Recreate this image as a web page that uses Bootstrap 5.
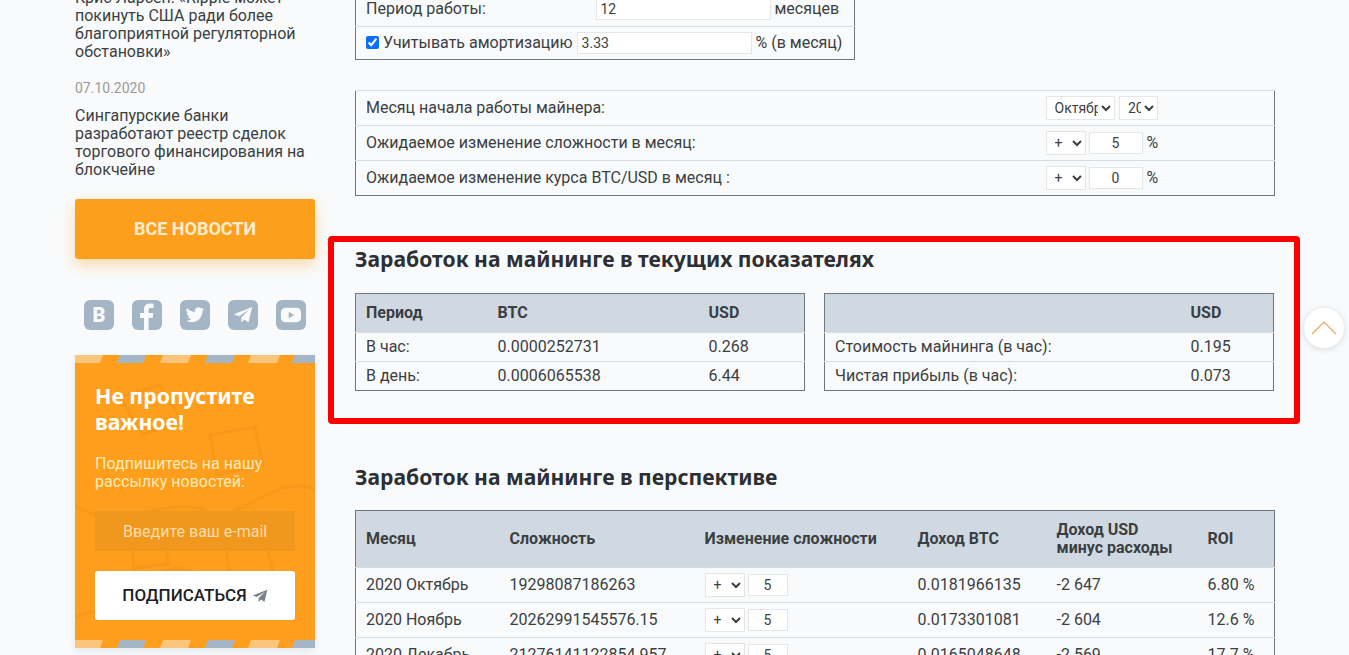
<!DOCTYPE html>
<html lang="ru">
<head>
    <meta charset="UTF-8">
    <meta name="viewport" content="width=device-width, initial-scale=1.0">
    <title>Калькулятор майнинга</title>
    <link href="https://cdn.jsdelivr.net/npm/bootstrap@5.3.2/dist/css/bootstrap.min.css" rel="stylesheet">
    <style>
        html, body { height: 100%; overflow: hidden; }
        body {
            font-family: Roboto, "Liberation Sans", sans-serif;
            font-size: 16px;
            background-color: #f9fafb;
            color: #3b3f42;
        }
        .page-wrap { padding-left: 75px; gap: 40px; }

        /* sidebar */
        .side-col { width: 240px; flex: none; margin-top: -11px; }
        .news-item { line-height: 18px; margin: 0; }
        .news-date { color: #999; line-height: 18px; margin: 18px 0 10px; font-size: 14px; }
        .all-news {
            display: block; height: 60px; line-height: 60px; margin-top: 20px;
            background: #fc9f1c; color: #ffeccf; font-weight: 700; font-size: 18px;
            text-align: center; text-decoration: none; border-radius: 3px;
            box-shadow: 0 6px 14px rgba(252, 159, 28, .35);
        }
        .social-row { margin: 41px 0 25px; padding: 0 9px; gap: 18px; }
        .social-ico {
            width: 30px; height: 30px; border-radius: 6px; background: #a4b5c5; color: #f9fafb;
            display: flex; align-items: center; justify-content: center; overflow: hidden;
            font-weight: 900; font-size: 20px; text-decoration: none;
        }
        .promo {
            position: relative; height: 293px; background: #fd9f1c; color: #fff; overflow: hidden;
            padding: 28px 20px 0; box-shadow: 0 3px 8px rgba(0, 0, 0, .08);
        }
        .promo-bg { position: absolute; left: 0; top: 0; }
        .promo-inner { position: relative; }
        .promo-title { font-family: "Noto Sans", sans-serif; font-weight: 700; font-size: 21.3px; line-height: 26px; margin: 0 0 20px; }
        .promo-sub { color: #ffe9b8; line-height: 18px; margin: 0 0 20px; }
        .promo-input {
            display: block; width: 200px; height: 40px; border: 0; background: #f0971e; text-align: left;
            padding: 0 0 0 28px; color: #ffdca8; font-size: 16px; border-radius: 0;
        }
        .promo-input::placeholder { color: #ffdca8; opacity: 1; }
        .promo-btn {
            width: 200px; height: 49px; margin-top: 20px; border: 0; background: #fff; border-radius: 3px;
            color: #1e2125; font-weight: 500; font-size: 17px; gap: 5px;
        }

        /* main */
        .main-col { width: 920px; flex: none; margin-top: -9px; }
        .calc-tbl { border-collapse: collapse; table-layout: fixed; border: 1px solid #6d7780; width: 100%; }
        .calc-tbl td, .calc-tbl th { padding: 0 10px; vertical-align: middle; }
        .calc-tbl td { border-top: 1px solid #d8dcdf; }
        .calc-tbl th { background: #d0d9e2; font-weight: 700; color: #3b3f42; line-height: 18px; }
        .calc-tbl thead tr { border-bottom: 1px solid #6d7780; }
        .rows-35 tr { height: 35px; }
        .calc-tbl tr.row-33 { height: 33px; }
        .calc-tbl tr.row-29 { height: 29px; }
        .head-39 thead tr { height: 39px; }
        .head-57 thead tr { height: 57px; }
        .work-tbl { width: 500px; }
        .start-tbl { margin-top: 30px; }
        .calc-input {
            height: 22px; border: 1px solid #e4e6e8; background: #fff; padding: 0 4px; font-size: 14px;
            color: #3b3f42; border-radius: 0;
        }
        .calc-input.mid { text-align: center; }
        .calc-sel {
            height: 24px; border: 1px solid #e4e6e8; background: #fff; font-size: 14px; color: #3b3f42;
            border-radius: 0; padding: 0 0 0 4px;
        }
        .w-plus { width: 40px; }
        .w-pct { width: 54px; margin-left: 3px; }
        .w-pct-sm { width: 40px; margin-left: 3px; }
        .red-box {
            border: 6px solid #fc0000; border-radius: 4px; margin: 40px -25px 0 -27px;
            padding: 5px 20px 27px 21px; height: 188px;
        }
        .block-title {
            font-family: "Noto Sans", sans-serif; font-weight: 700; font-size: 21.1px; line-height: 24px;
            color: #2c2f33; margin: 0;
        }
        .half-tbls { gap: 19px; margin-top: 22px; }
        .half-tbls > * { width: 450px; flex: none; }
        .persp-title { margin: 41px 0 21px; }
        .chk-box { margin: 0 4px 0 0; vertical-align: -1px; accent-color: #0d6efd; }
        .to-top {
            position: fixed; left: 1304px; top: 308px; width: 40px; height: 40px; border-radius: 50%;
            background: #fff; box-shadow: 0 1px 6px rgba(0, 0, 0, .14);
            display: flex; align-items: center; justify-content: center;
        }
    </style>
</head>
<body>
    <div class="d-flex page-wrap">
        <!-- левая колонка -->
        <aside class="side-col">
            <p class="news-item">Крис Ларсен: «Ripple может покинуть США ради более благоприятной регуляторной обстановки»</p>
            <p class="news-date">07.10.2020</p>
            <p class="news-item">Сингапурские банки разработают реестр сделок торгового финансирования на блокчейне</p>
            <a href="#" class="all-news">ВСЕ НОВОСТИ</a>

            <div class="d-flex social-row">
                <a href="#" class="social-ico">B</a>
                <a href="#" class="social-ico">
                    <svg width="30" height="30" viewBox="0 0 30 30"><path fill="#f9fafb" d="M12 30V18H8v-5h4V9.500C12 5.500 14.500 3.500 18 3.500c1.700 0 3 .1 3.500.2v4.300H19c-1.900 0-2.400.9-2.400 2.300V13h4.700l-.7 5h-4v12z"/></svg>
                </a>
                <a href="#" class="social-ico">
                    <svg width="20" height="20" viewBox="0 0 24 24"><path fill="#f9fafb" d="M23 5a9 9 0 0 1-2.600.7 4.500 4.500 0 0 0 2-2.500 9 9 0 0 1-2.900 1.100 4.500 4.500 0 0 0-7.700 4.100A12.800 12.800 0 0 1 2.500 3.700a4.500 4.500 0 0 0 1.400 6 4.500 4.500 0 0 1-2-.6c0 2.200 1.500 4 3.600 4.500a4.500 4.500 0 0 1-2 .1 4.500 4.500 0 0 0 4.200 3.100A9 9 0 0 1 1 18.700 12.800 12.800 0 0 0 8 20.700c8.300 0 12.900-6.900 12.900-12.900v-.6A9 9 0 0 0 23 5z"/></svg>
                </a>
                <a href="#" class="social-ico">
                    <svg width="20" height="20" viewBox="0 0 24 24"><path fill="#f9fafb" d="M23 2.500 1 11.200l6.200 2.200L19.500 5.500 10 15v6l3.600-3.700 5 3.700z"/></svg>
                </a>
                <a href="#" class="social-ico">
                    <svg width="22" height="22" viewBox="0 0 24 24"><rect x="1" y="4" width="22" height="16" rx="5" fill="#f9fafb"/><path fill="#a4b5c5" d="M9.500 8.500v7l6-3.500z"/></svg>
                </a>
            </div>

            <div class="promo">
                <svg class="promo-bg" width="240" height="293" viewBox="0 0 240 293">
                    <g fill="none" stroke="#f7971b" stroke-width="3">
                        <path d="M45 42l40-12 22 36-40 14zM135 80l45-8 8 38-46 10z"/>
                        <path d="M0 150c40 30 90-10 130 5M130 155c30 20 70-40 110-20M30 235l70-22 90 20M0 262c50-20 90 0 140-8"/>
                        <path d="M150 190l40-8 10 46-42 8zM55 175l34-6 4 40-34 4z"/>
                    </g>
                    <g fill="#fbc57c">
                        <path d="M0 0H28L25 8H0zM88 0H116L113 8H85zM176 0H205L202 8H173z"/>
                        <path d="M0 285H28L25 293H0zM88 285H116L113 293H85zM176 285H205L202 293H173z"/>
                    </g>
                    <g fill="#a4b5c5">
                        <path d="M45 0H71L68 8H42zM133 0H160L157 8H130zM220 0H240V8H217z"/>
                        <path d="M45 285H71L68 293H42zM133 285H160L157 293H130zM220 285H240V293H217z"/>
                    </g>
                </svg>
                <div class="promo-inner">
                    <p class="promo-title">Не пропустите важное!</p>
                    <p class="promo-sub">Подпишитесь на нашу рассылку новостей:</p>
                    <input type="text" class="promo-input" placeholder="Введите ваш e-mail">
                    <button type="button" class="promo-btn d-flex align-items-center justify-content-center">
                        ПОДПИСАТЬСЯ
                        <svg width="16" height="16" viewBox="0 0 24 24"><path fill="#7b8288" d="M23 2.500 1 11.200l6.200 2.200L19.500 5.500 10 15v6l3.600-3.700 5 3.700z"/></svg>
                    </button>
                </div>
            </div>
        </aside>

        <!-- основная колонка -->
        <main class="main-col">
            <table class="calc-tbl work-tbl rows-35">
                <colgroup><col style="width:230px"><col></colgroup>
                <tr>
                    <td>Период работы:</td>
                    <td class="text-nowrap"><input type="text" class="calc-input" style="width:175px" value="12"> месяцев</td>
                </tr>
                <tr class="row-33">
                    <td colspan="2" class="text-nowrap"><input type="checkbox" class="chk-box" checked>Учитывать амортизацию <input type="text" class="calc-input" style="width:175px" value="3.33"> % (в месяц)</td>
                </tr>
            </table>

            <table class="calc-tbl start-tbl rows-35">
                <colgroup><col><col style="width:239px"></colgroup>
                <tr>
                    <td>Месяц начала работы майнера:</td>
                    <td class="text-nowrap">
                        <select class="calc-sel" style="width:69.500px"><option>Октябрь</option></select>
                        <select class="calc-sel" style="width:39px"><option>2020</option></select>
                    </td>
                </tr>
                <tr>
                    <td>Ожидаемое изменение сложности в месяц:</td>
                    <td class="text-nowrap">
                        <select class="calc-sel w-plus"><option>+</option></select><input type="text" class="calc-input mid w-pct" value="5"> %
                    </td>
                </tr>
                <tr>
                    <td>Ожидаемое изменение курса BTC/USD в месяц :</td>
                    <td class="text-nowrap">
                        <select class="calc-sel w-plus"><option>+</option></select><input type="text" class="calc-input mid w-pct" value="0"> %
                    </td>
                </tr>
            </table>

            <section class="red-box">
                <h2 class="block-title">Заработок на майнинге в текущих показателях</h2>
                <div class="d-flex half-tbls">
                    <table class="calc-tbl head-39">
                        <colgroup><col style="width:132px"><col style="width:211px"><col></colgroup>
                        <thead><tr><th>Период</th><th>BTC</th><th>USD</th></tr></thead>
                        <tbody>
                            <tr class="row-29"><td>В час:</td><td>0.0000252731</td><td>0.268</td></tr>
                            <tr class="row-29"><td>В день:</td><td>0.0006065538</td><td>6.44</td></tr>
                        </tbody>
                    </table>
                    <table class="calc-tbl head-39">
                        <colgroup><col style="width:356px"><col></colgroup>
                        <thead><tr><th></th><th>USD</th></tr></thead>
                        <tbody>
                            <tr class="row-29"><td>Стоимость майнинга (в час):</td><td>0.195</td></tr>
                            <tr class="row-29"><td>Чистая прибыль (в час):</td><td>0.073</td></tr>
                        </tbody>
                    </table>
                </div>
            </section>

            <h2 class="block-title persp-title">Заработок на майнинге в перспективе</h2>
            <table class="calc-tbl head-57 rows-35">
                <colgroup>
                    <col style="width:144px"><col style="width:195px"><col style="width:213px">
                    <col style="width:139px"><col style="width:151px"><col>
                </colgroup>
                <thead>
                    <tr><th>Месяц</th><th>Сложность</th><th>Изменение сложности</th><th>Доход BTC</th><th>Доход USD<br>минус расходы</th><th>ROI</th></tr>
                </thead>
                <tbody>
                    <tr>
                        <td>2020 Октябрь</td><td>19298087186263</td>
                        <td class="text-nowrap"><select class="calc-sel w-plus"><option>+</option></select><input type="text" class="calc-input mid w-pct-sm" value="5"></td>
                        <td>0.0181966135</td><td>-2 647</td><td>6.80 %</td>
                    </tr>
                    <tr>
                        <td>2020 Ноябрь</td><td>20262991545576.15</td>
                        <td class="text-nowrap"><select class="calc-sel w-plus"><option>+</option></select><input type="text" class="calc-input mid w-pct-sm" value="5"></td>
                        <td>0.0173301081</td><td>-2 604</td><td>12.6 %</td>
                    </tr>
                    <tr>
                        <td>2020 Декабрь</td><td>21276141122854.957</td>
                        <td class="text-nowrap"><select class="calc-sel w-plus"><option>+</option></select><input type="text" class="calc-input mid w-pct-sm" value="5"></td>
                        <td>0.0165048648</td><td>-2 569</td><td>17.7 %</td>
                    </tr>
                </tbody>
            </table>
        </main>
    </div>

    <a href="#" class="to-top" aria-label="Наверх">
        <svg width="26" height="14" viewBox="0 0 26 14" fill="none" stroke="#e9a35a" stroke-width="1.200"><path d="M1 13 13 1l12 12"/></svg>
    </a>

    <script src="https://cdn.jsdelivr.net/npm/bootstrap@5.3.2/dist/js/bootstrap.bundle.min.js"></script>
</body>
</html>
